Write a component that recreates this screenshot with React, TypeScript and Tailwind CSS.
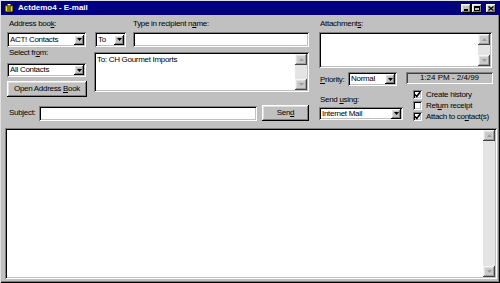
import React from 'react';

const sunken =
  'bg-white shadow-[inset_1px_1px_0_#808080,inset_-1px_-1px_0_#ffffff,inset_2px_2px_0_#000000,inset_-2px_-2px_0_#c0c0c0]';
const raised =
  'bg-[#c0c0c0] shadow-[inset_-1px_-1px_0_#000000,inset_1px_1px_0_#ffffff,inset_-2px_-2px_0_#808080,inset_2px_2px_0_#dfdfdf]';

function U({ children }: { children: React.ReactNode }) {
  return <span className="underline underline-offset-1">{children}</span>;
}

function Arrow() {
  return (
    <svg width="5" height="3" viewBox="0 0 5 3">
      <path d="M0 0h5L2.5 3z" fill="#000" />
    </svg>
  );
}

function Combo({ text, className }: { text: string; className: string }) {
  return (
    <div className={`${sunken} ${className} flex items-center pl-[3px] pr-[2px]`}>
      <span className="flex-1 truncate">{text}</span>
      <div className={`${raised} w-[10px] h-[10px] flex items-center justify-center`}>
        <Arrow />
      </div>
    </div>
  );
}

function ScrollBar({ arrowColor = '#000' }: { arrowColor?: string }) {
  return (
    <div className="w-[12px] h-full flex flex-col bg-[#e4e4e4]">
      <div className={`${raised} h-[11px] flex items-center justify-center opacity-70`}>
        <svg width="5" height="3" viewBox="0 0 5 3">
          <path d="M0 3h5L2.5 0z" fill={arrowColor} />
        </svg>
      </div>
      <div className="flex-1" />
      <div className={`${raised} h-[11px] flex items-center justify-center opacity-70`}>
        <svg width="5" height="3" viewBox="0 0 5 3">
          <path d="M0 0h5L2.5 3z" fill={arrowColor} />
        </svg>
      </div>
    </div>
  );
}

function Check({ checked, label }: { checked: boolean; label: React.ReactNode }) {
  return (
    <div className="flex items-center h-[11px] gap-[4px]">
      <div className={`${sunken} w-[9px] h-[9px] flex items-center justify-center`}>
        {checked && (
          <svg width="7" height="7" viewBox="0 0 7 7">
            <path d="M1 3.5l1.8 2L6 1.2" stroke="#000" strokeWidth="1.6" fill="none" />
          </svg>
        )}
      </div>
      <span>{label}</span>
    </div>
  );
}

export default function App() {
  return (
    <div className="w-[500px] h-[283px] bg-[#c0c0c0] p-[1px] overflow-hidden font-['Liberation_Sans',Arial,sans-serif] text-[8px] leading-[10px] tracking-[-0.3px] text-black shadow-[inset_1px_1px_0_#dfdfdf,inset_-1px_-1px_0_#000000,inset_-2px_-2px_0_#808080]">
      {/* Title bar */}
      <div className="h-[14px] bg-[#000080] flex items-center pl-[3px] pr-[3px]">
        <svg width="10" height="10" viewBox="0 0 10 10">
          <rect x="1" y="2" width="8" height="7" fill="#ffe000" stroke="#000" strokeWidth="1" />
          <rect x="3" y="0.5" width="4" height="2.5" fill="#fff" stroke="#000" strokeWidth="1" />
          <path d="M3 5h4M3 7h4" stroke="#000" strokeWidth="1" />
        </svg>
        <span className="ml-[4px] text-white font-bold tracking-normal">Actdemo4 - E-mail</span>
        <div className="flex-1" />
        <div className={`${raised} w-[10px] h-[9px] flex items-end justify-center pb-[2px]`}>
          <div className="w-[4px] h-[1.5px] bg-black" />
        </div>
        <div className={`${raised} w-[10px] h-[9px] ml-[1px] flex items-center justify-center`}>
          <div className="w-[6px] h-[5px] border border-black border-t-2" />
        </div>
        <div className={`${raised} w-[10px] h-[9px] ml-[4px] flex items-center justify-center`}>
          <svg width="6" height="5" viewBox="0 0 6 5">
            <path d="M0.5 0.5l5 4M5.5 0.5l-5 4" stroke="#000" strokeWidth="1.3" />
          </svg>
        </div>
      </div>

      {/* Form */}
      <div className="flex px-[6px] pt-[4px]">
        <div className="w-[302px] flex flex-col">
          <div className="flex">
            {/* Left column */}
            <div className="w-[80px] flex flex-col">
              <div className="h-[10px] ml-[2px]">
                Address boo<U>k</U>:
              </div>
              <Combo text="ACT! Contacts" className="mt-[3px] h-[15px] w-[79px]" />
              <div className="h-[10px] ml-[2px] mt-[1px]">
                Select fr<U>o</U>m:
              </div>
              <Combo text="All Contacts" className="mt-[5px] h-[14px] w-[79px]" />
              <div className={`${raised} mt-[4px] h-[16px] w-[80px] flex items-center justify-center`}>
                <span>
                  Open Address <U>B</U>ook
                </span>
              </div>
            </div>

            {/* Middle column */}
            <div className="w-[215px] ml-[7px] flex flex-col">
              <div className="h-[10px] ml-[39px]">
                Type in recipient n<U>a</U>me:
              </div>
              <div className="flex mt-[3px]">
                <Combo text="To" className="ml-[1px] h-[15px] w-[31px]" />
                <div className={`${sunken} ml-[7px] flex-1 h-[15px]`} />
              </div>
              <div className={`${sunken} mt-[5px] h-[40px] flex p-[2px]`}>
                <div className="flex-1 pl-[1px] pt-[1px]">To: CH Gourmet Imports</div>
                <ScrollBar arrowColor="#808080" />
              </div>
            </div>
          </div>

          {/* Subject row */}
          <div className="flex items-center mt-[8px] h-[16px]">
            <div className="w-[32px] pl-[2px]">
              Sub<U>j</U>ect:
            </div>
            <div className={`${sunken} w-[218px] h-[15px]`} />
            <div className={`${raised} ml-[5px] w-[47px] h-[16px] flex items-center justify-center`}>
              <span>
                Sen<U>d</U>
              </span>
            </div>
          </div>
        </div>

        {/* Right column */}
        <div className="ml-[10px] w-[174px] flex flex-col">
          <div className="h-[10px] ml-[1px]">
            Attachment<U>s</U>:
          </div>
          <div className={`${sunken} mt-[3px] h-[36px] w-[173px] flex justify-end p-[2px]`}>
            <ScrollBar arrowColor="#808080" />
          </div>
          <div className="flex items-start mt-[4px]">
            <div className="mt-[3px] ml-[1px] w-[28px]">
              <U>P</U>riority:
            </div>
            <Combo text="Normal" className="h-[14px] w-[49px]" />
            <div className="ml-[9px] w-[87px] h-[12px] flex items-center justify-center tracking-normal shadow-[inset_1px_1px_0_#808080,inset_-1px_-1px_0_#ffffff,inset_2px_2px_0_#404040]">
              1:24 PM - 2/4/99
            </div>
          </div>
          <div className="flex">
            <div className="flex flex-col w-[94px]">
              <div className="mt-[9px] ml-[1px] h-[10px]">
                Send <U>u</U>sing:
              </div>
              <Combo text="Internet Mail" className="mt-[2px] h-[13px] w-[84px]" />
            </div>
            <div className="flex flex-col mt-[3px]">
              <Check checked label="Create history" />
              <Check checked={false} label={<>Ret<U>u</U>rn receipt</>} />
              <Check checked label={<>Attach to co<U>n</U>tact(s)</>} />
            </div>
          </div>
        </div>
      </div>

      {/* Message body */}
      <div className={`${sunken} mt-[6px] ml-[4px] mr-[2px] h-[151px] flex justify-end p-[2px]`}>
        <ScrollBar arrowColor="#808080" />
      </div>
    </div>
  );
}
